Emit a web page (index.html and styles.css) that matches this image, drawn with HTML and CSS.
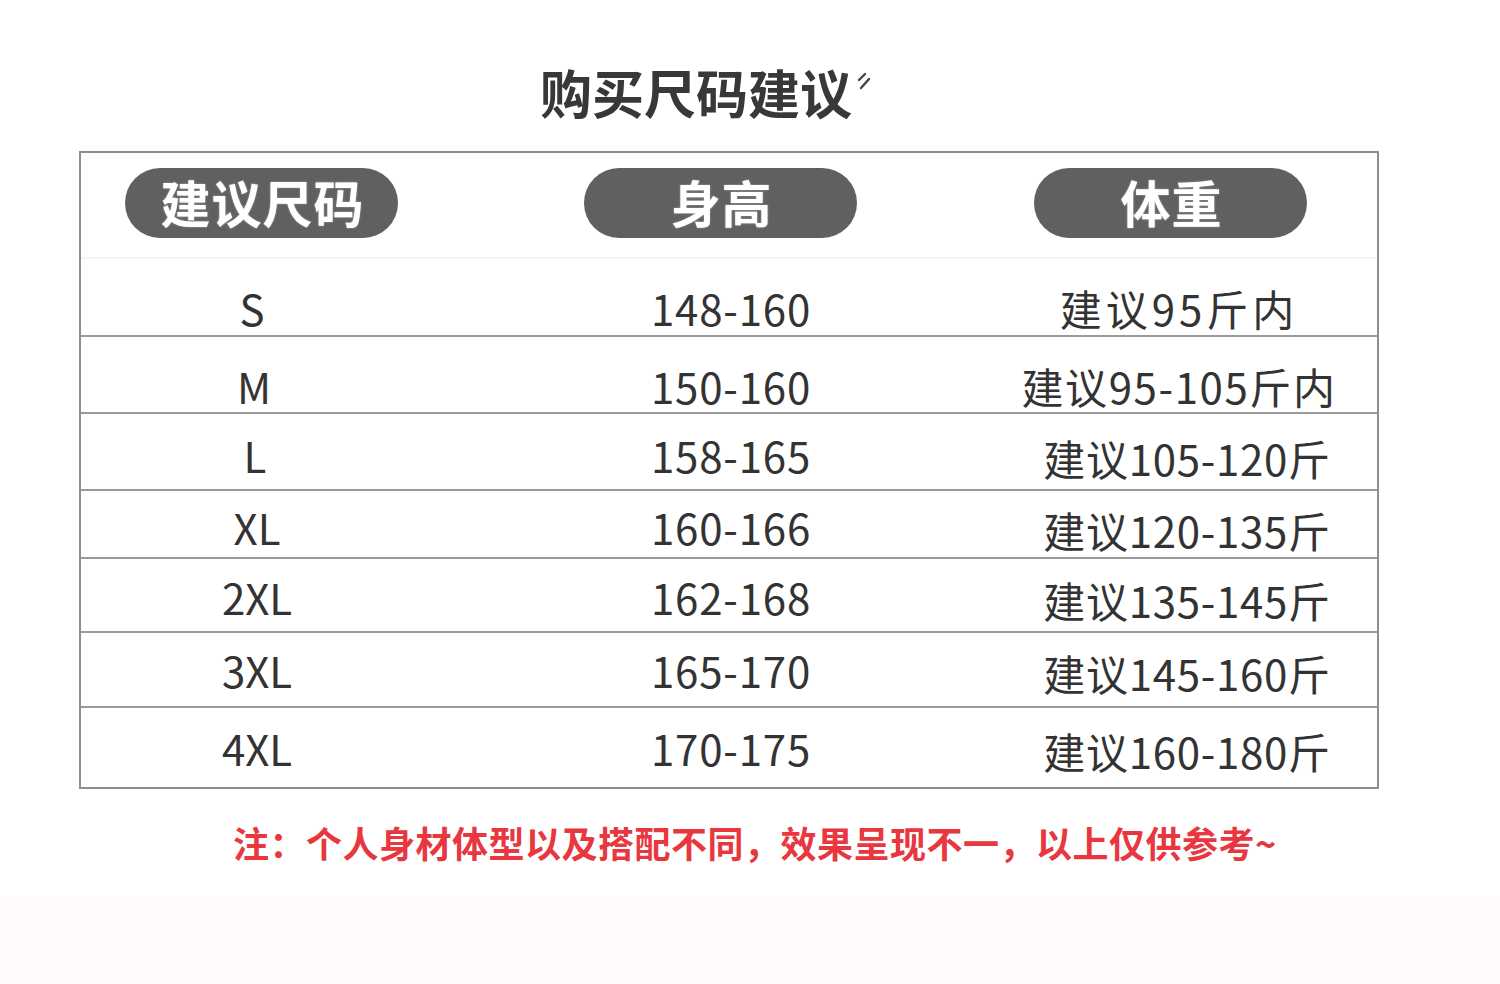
FILE: index.html
```html
<!DOCTYPE html>
<html lang="zh-CN">
<head>
<meta charset="utf-8">
<title>购买尺码建议</title>
<link rel="stylesheet" href="styles.css">
</head>
<body>
<div class="page">
  <div class="title-wrap">
    <h1 class="title">购买尺码建议<svg class="mark" width="16" height="20" viewBox="0 0 16 20"><path d="M9 2 L3 8 M13 7 L5 16" stroke="#444" stroke-width="2.4" stroke-linecap="round" fill="none"/></svg></h1>
  </div>
  <div class="table">
    <div class="head">
      <div class="hcell"><span class="pill">建议尺码</span></div>
      <div class="hcell"><span class="pill">身高</span></div>
      <div class="hcell"><span class="pill">体重</span></div>
    </div>
    <div class="row r1"><div class="c size">S</div><div class="c h">148-160</div><div class="c w w1">建议95斤内</div></div>
    <div class="row r2"><div class="c size">M</div><div class="c h">150-160</div><div class="c w w2">建议95-105斤内</div></div>
    <div class="row r3"><div class="c size">L</div><div class="c h">158-165</div><div class="c w">建议105-120斤</div></div>
    <div class="row r4"><div class="c size">XL</div><div class="c h">160-166</div><div class="c w">建议120-135斤</div></div>
    <div class="row r5"><div class="c size">2XL</div><div class="c h">162-168</div><div class="c w">建议135-145斤</div></div>
    <div class="row r6"><div class="c size">3XL</div><div class="c h">165-170</div><div class="c w">建议145-160斤</div></div>
    <div class="row r7"><div class="c size">4XL</div><div class="c h">170-175</div><div class="c w">建议160-180斤</div></div>
  </div>
  <p class="note">注：个人身材体型以及搭配不同，效果呈现不一，以上仅供参考~</p>
  <div class="footer"></div>
</div>
</body>
</html>
```
FILE: styles.css
```css
* { box-sizing: border-box; }
html, body { margin: 0; padding: 0; background: #ffffff; }
body {
  font-family: "Noto Sans CJK SC", "Noto Sans", sans-serif;
  color: #333333;
  width: 1500px;
  height: 984px;
  overflow: hidden;
}
.page { display: flex; flex-direction: column; height: 984px; }
.title-wrap {
  padding-top: 66px;
  padding-left: 540px;
  height: 151px;
}
.title {
  margin: 0;
  font-size: 52px;
  line-height: 52px;
  font-weight: 700;
  color: #383838;
  letter-spacing: 0;
  display: flex;
  align-items: flex-start;
}
.mark { margin-left: 4px; margin-top: 6px; }
.table {
  margin-left: 79px;
  width: 1300px;
  border: 2px solid #8e8e8e;
}
.head {
  height: 106px;
  padding-top: 15px;
  padding-left: 44px;
  display: grid;
  grid-template-columns: 459px 450px 273px;
  border-bottom: 2px solid #f4f4f4;
}
.pill {
  display: flex;
  align-items: center;
  justify-content: center;
  width: 273px;
  height: 70px;
  border-radius: 35px;
  background: #606060;
  color: #ffffff;
  font-size: 50px;
  font-weight: 700;
  line-height: 1;
  letter-spacing: 1px;
  padding-bottom: 4px;
  padding-left: 2px;
  text-shadow: 0 0 2px rgba(255,255,255,0.5);
}
.row {
  display: grid;
  grid-template-columns: 352px 600px 344px;
  align-items: center;
  border-bottom: 2px solid #9a9a9a;
  font-size: 42px;
  line-height: 42px;
  color: #333333;
}
.row.r7 { border-bottom: none; }
.c { text-align: center; white-space: nowrap; }
.h { letter-spacing: 0.8px; padding-right: 4px; }
.w { padding-right: 36px; letter-spacing: 0.7px; }
.w1 { padding-right: 52px; letter-spacing: 4px; }
.w2 { padding-right: 0; margin-left: -52px; letter-spacing: 1.6px; }
.r1 { height: 78px; padding-top: 22px; }
.r2 { height: 77px; padding-top: 23px; }
.r3 { height: 77px; padding-top: 7px; }
.r4 { height: 68px; padding-top: 6px; }
.r5 { height: 74px; padding-top: 4px; }
.r6 { height: 75px; padding-top: 1px; }
.r7 { height: 79px; padding-top: 0; }
.r1 .size { padding-right: 10px; }
.r2 .size { padding-right: 6px; }
.r3 .size { padding-right: 4px; }
.r3 .w, .r4 .w, .r5 .w, .r6 .w, .r7 .w { padding-top: 6px; }
.note {
  margin: 34px 0 0 0;
  padding-left: 233px;
  font-size: 36px;
  line-height: 38px;
  font-weight: 700;
  color: #e8373e;
  letter-spacing: 0.5px;
}
.footer {
  margin-top: 36px;
  flex: 1;
  background: #fffbfb;
}
```
